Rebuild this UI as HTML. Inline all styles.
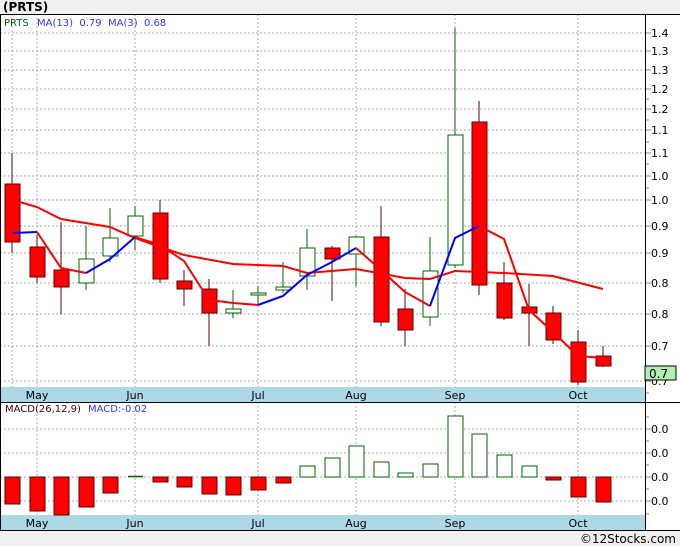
<!DOCTYPE html><html><head><style>
body{margin:0;width:680px;height:546px;background:#f0f0f0;font-family:"Liberation Sans",Verdana,sans-serif;overflow:hidden}
svg{position:absolute;left:0;top:0}
</style></head><body>
<svg width="680" height="546" viewBox="0 0 680 546" font-family="DejaVu Sans, Liberation Sans, sans-serif">
<rect x="0" y="0" width="680" height="546" fill="#f0f0f0"/>
<text x="3" y="11" font-size="12" font-weight="bold" fill="#000">(PRTS)</text>
<rect x="0" y="14" width="680" height="517" fill="#fff"/>
<g stroke="#aaa" stroke-dasharray="2,2" stroke-width="1">
<line x1="0" x2="645" y1="33" y2="33"/><line x1="0" x2="645" y1="51" y2="51"/><line x1="0" x2="645" y1="70" y2="70"/><line x1="0" x2="645" y1="89" y2="89"/><line x1="0" x2="645" y1="109" y2="109"/><line x1="0" x2="645" y1="130" y2="130"/><line x1="0" x2="645" y1="153" y2="153"/><line x1="0" x2="645" y1="176" y2="176"/><line x1="0" x2="645" y1="200" y2="200"/><line x1="0" x2="645" y1="226" y2="226"/><line x1="0" x2="645" y1="253" y2="253"/><line x1="0" x2="645" y1="283" y2="283"/><line x1="0" x2="645" y1="314" y2="314"/><line x1="0" x2="645" y1="346" y2="346"/><line x1="0" x2="645" y1="381" y2="381"/>
<line x1="0" x2="645" y1="429" y2="429"/><line x1="0" x2="645" y1="453" y2="453"/><line x1="0" x2="645" y1="477" y2="477"/><line x1="0" x2="645" y1="501" y2="501"/>
<line x1="12" x2="12" y1="14" y2="387"/><line x1="37" x2="37" y1="14" y2="530"/><line x1="135" x2="135" y1="14" y2="530"/><line x1="258" x2="258" y1="14" y2="530"/><line x1="356" x2="356" y1="14" y2="530"/><line x1="455" x2="455" y1="14" y2="530"/><line x1="578" x2="578" y1="14" y2="530"/>
</g>
<g stroke="#888" stroke-width="1">
<line x1="645" x2="651" y1="33" y2="33"/><line x1="645" x2="651" y1="51" y2="51"/><line x1="645" x2="651" y1="70" y2="70"/><line x1="645" x2="651" y1="89" y2="89"/><line x1="645" x2="651" y1="109" y2="109"/><line x1="645" x2="651" y1="130" y2="130"/><line x1="645" x2="651" y1="153" y2="153"/><line x1="645" x2="651" y1="176" y2="176"/><line x1="645" x2="651" y1="200" y2="200"/><line x1="645" x2="651" y1="226" y2="226"/><line x1="645" x2="651" y1="253" y2="253"/><line x1="645" x2="651" y1="283" y2="283"/><line x1="645" x2="651" y1="314" y2="314"/><line x1="645" x2="651" y1="346" y2="346"/><line x1="645" x2="651" y1="381" y2="381"/>
<line x1="645" x2="651" y1="429" y2="429"/><line x1="645" x2="651" y1="453" y2="453"/><line x1="645" x2="651" y1="477" y2="477"/><line x1="645" x2="651" y1="501" y2="501"/>
<line x1="645" x2="649" y1="99" y2="99"/><line x1="645" x2="649" y1="120" y2="120"/><line x1="645" x2="649" y1="142" y2="142"/><line x1="645" x2="649" y1="164" y2="164"/><line x1="645" x2="649" y1="188" y2="188"/><line x1="645" x2="649" y1="417" y2="417"/><line x1="645" x2="649" y1="441" y2="441"/><line x1="645" x2="649" y1="465" y2="465"/><line x1="645" x2="649" y1="489" y2="489"/><line x1="645" x2="649" y1="514" y2="514"/><line x1="645" x2="649" y1="393" y2="393"/>
</g>
<g stroke="#000" stroke-width="1"><line x1="0" x2="680" y1="14.5" y2="14.5"/><line x1="0.5" x2="0.5" y1="14" y2="531"/><line x1="645.5" x2="645.5" y1="14" y2="531"/><line x1="0" x2="680" y1="402.5" y2="402.5"/><line x1="0" x2="680" y1="530.5" y2="530.5"/></g>
<rect x="1" y="387" width="644" height="15" fill="#add8e6"/>
<rect x="1" y="515" width="644" height="15" fill="#add8e6"/>
<g font-size="11" fill="#000" text-anchor="middle"><text x="37" y="399">May</text><text x="135" y="399">Jun</text><text x="258" y="399">Jul</text><text x="356" y="399">Aug</text><text x="455" y="399">Sep</text><text x="578" y="399">Oct</text>
<text x="37" y="527">May</text><text x="135" y="527">Jun</text><text x="258" y="527">Jul</text><text x="356" y="527">Aug</text><text x="455" y="527">Sep</text><text x="578" y="527">Oct</text></g>
<g font-size="11" fill="#000"><text x="651" y="37">1.4</text><text x="651" y="55">1.3</text><text x="651" y="74">1.3</text><text x="651" y="93">1.2</text><text x="651" y="113">1.2</text><text x="651" y="134">1.1</text><text x="651" y="157">1.1</text><text x="651" y="180">1.0</text><text x="651" y="204">1.0</text><text x="651" y="230">0.9</text><text x="651" y="257">0.9</text><text x="651" y="287">0.8</text><text x="651" y="318">0.8</text><text x="651" y="350">0.7</text><text x="651" y="385">0.7</text>
<text x="651" y="433">0.0</text><text x="651" y="457">0.0</text><text x="651" y="481">0.0</text><text x="651" y="505">0.0</text></g>
<rect x="645" y="366" width="31" height="14" fill="#b0f0b0" stroke="#000"/><text x="649" y="378" font-size="12">0.7</text>
<text x="4" y="26" font-size="10" fill="#006400">PRTS</text><text x="37" y="26" font-size="10" fill="#3333ff" xml:space="preserve">MA(13)  0.79  MA(3)  0.68</text>
<text x="5" y="412" font-size="10" fill="#400000">MACD(26,12,9)</text><text x="88" y="412" font-size="10" fill="#3333ff">MACD:-0.02</text>
<text x="676" y="543" font-size="12" fill="#000" text-anchor="end">©12Stocks.com</text>
<g stroke-width="1">
<g stroke="#600">
<line x1="12" x2="12" y1="153" y2="253"/><line x1="37" x2="37" y1="235" y2="283"/><line x1="61" x2="61" y1="222" y2="314"/><line x1="160" x2="160" y1="200" y2="283"/><line x1="184" x2="184" y1="270" y2="306"/><line x1="209" x2="209" y1="279" y2="346"/><line x1="332" x2="332" y1="246" y2="301"/><line x1="381" x2="381" y1="206" y2="326"/><line x1="405" x2="405" y1="289" y2="346"/><line x1="479" x2="479" y1="101" y2="295"/><line x1="504" x2="504" y1="262" y2="320"/><line x1="529" x2="529" y1="284" y2="346"/><line x1="553" x2="553" y1="306" y2="344"/><line x1="578" x2="578" y1="330" y2="385"/><line x1="603" x2="603" y1="346" y2="367"/></g>
<g stroke="#006400"><line x1="86" x2="86" y1="226" y2="290"/><line x1="110" x2="110" y1="208" y2="262"/><line x1="135" x2="135" y1="206" y2="250"/><line x1="233" x2="233" y1="290" y2="318"/><line x1="258" x2="258" y1="286" y2="305"/><line x1="283" x2="283" y1="262" y2="293"/><line x1="307" x2="307" y1="229" y2="290"/><line x1="356" x2="356" y1="236" y2="286"/><line x1="430" x2="430" y1="237" y2="326"/><line x1="455" x2="455" y1="28" y2="268"/></g>
<g fill="#f00" stroke="#600">
<rect x="5" y="184" width="15" height="58"/><rect x="30" y="247" width="15" height="30"/><rect x="54" y="270" width="15" height="17"/><rect x="153" y="213" width="15" height="66"/><rect x="177" y="281" width="15" height="8"/><rect x="202" y="289" width="15" height="24"/><rect x="325" y="248" width="15" height="11"/><rect x="374" y="237" width="15" height="85"/><rect x="398" y="309" width="15" height="21"/><rect x="472" y="122" width="15" height="163"/><rect x="497" y="283" width="15" height="35"/><rect x="522" y="307" width="15" height="6"/><rect x="546" y="313" width="15" height="27"/><rect x="571" y="342" width="15" height="40"/><rect x="596" y="356" width="15" height="10"/></g>
<g fill="#fff" stroke="#006400">
<rect x="79" y="259" width="15" height="24"/><rect x="103" y="238" width="15" height="18"/><rect x="128" y="216" width="15" height="20"/><rect x="226" y="309" width="15" height="4"/><rect x="251" y="293" width="15" height="2"/><rect x="276" y="287" width="15" height="3"/><rect x="300" y="248" width="15" height="28"/><rect x="349" y="237" width="15" height="17"/><rect x="423" y="271" width="15" height="46"/><rect x="448" y="135" width="15" height="130"/></g>
</g>
<polyline fill="none" stroke="#f00" stroke-width="2" points="13,200 37,207 61,219 110,227 135,238 160,247 184,255 233,264 283,266 307,273 356,269 405,278 430,279 455,271 504,273 553,276 603,289"/>
<g fill="none" stroke-width="2">
<polyline stroke="#00f" points="13,233 37,232"/><polyline stroke="#f00" points="37,232 61,268 86,273"/><polyline stroke="#00f" points="86,273 110,259 135,237"/><polyline stroke="#f00" points="135,237 160,245 184,261 209,300 233,303 258,305"/><polyline stroke="#00f" points="258,305 283,296 307,275 332,262 356,248"/><polyline stroke="#f00" points="356,248 381,270 405,292 430,306"/><polyline stroke="#00f" points="430,306 455,238 479,226"/><polyline stroke="#f00" points="479,226 504,239 529,310 553,332 578,356 603,358"/></g>
<g fill="#f00" stroke="#600">
<rect x="5" y="477" width="15" height="27"/><rect x="30" y="477" width="15" height="34"/><rect x="54" y="477" width="15" height="38"/><rect x="79" y="477" width="15" height="30"/><rect x="103" y="477" width="15" height="16"/><rect x="153" y="477" width="15" height="5"/><rect x="177" y="477" width="15" height="10"/><rect x="202" y="477" width="15" height="17"/><rect x="226" y="477" width="15" height="18"/><rect x="251" y="477" width="15" height="13"/><rect x="276" y="477" width="15" height="6"/><rect x="546" y="477" width="15" height="3"/><rect x="571" y="477" width="15" height="20"/><rect x="596" y="477" width="15" height="25"/></g>
<line x1="128" x2="143" y1="476.5" y2="476.5" stroke="#006400" stroke-width="1.5"/>
<g fill="#fff" stroke="#006400">
<rect x="300" y="466" width="15" height="11"/><rect x="325" y="458" width="15" height="19"/><rect x="349" y="446" width="15" height="31"/><rect x="374" y="462" width="15" height="15"/><rect x="398" y="473" width="15" height="4"/><rect x="423" y="464" width="15" height="13"/><rect x="448" y="416" width="15" height="61"/><rect x="472" y="434" width="15" height="43"/><rect x="497" y="455" width="15" height="22"/><rect x="522" y="466" width="15" height="11"/></g>
</svg>
</body></html>
